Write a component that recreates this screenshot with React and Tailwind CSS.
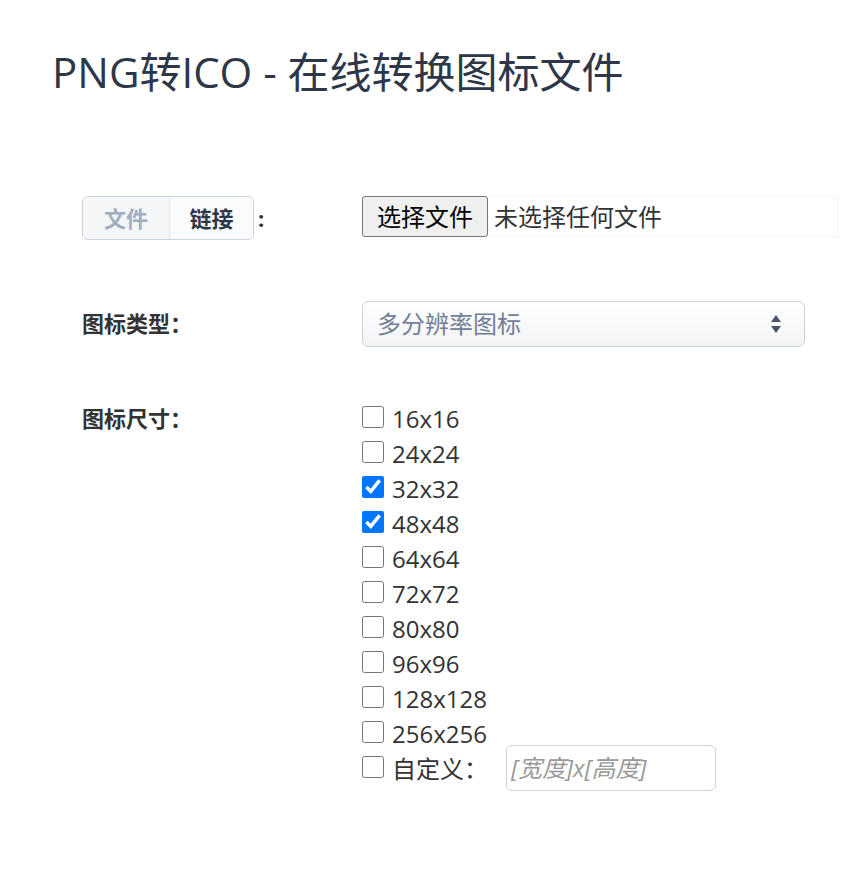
import { useState } from 'react'

const sizes = ['16x16', '24x24', '32x32', '48x48', '64x64', '72x72', '80x80', '96x96', '128x128', '256x256']
const font = { fontFamily: '"Open Sans", "Noto Sans CJK SC", sans-serif' }

const App = () => {
  const [tab, setTab] = useState('link')
  const [checked, setChecked] = useState({ '32x32': true, '48x48': true })

  return (
    <div className="min-h-screen bg-white text-[#333]" style={font}>
      <h1 className="pl-[52px] pt-[42px] text-[42px] leading-[60px] text-[#2d3748]">PNG转ICO - 在线转换图标文件</h1>

      <div className="mt-[94px] pl-[82px] flex flex-col">
        {/* source */}
        <div className="flex items-start">
          <div className="w-[280px] flex items-center">
            <div className="flex h-[44px] border border-[#cbd5e0] rounded-md overflow-hidden text-[22px] font-bold">
              <button onClick={() => setTab('file')}
                className={`w-[86px] ${tab === 'file' ? 'bg-white text-[#2d3748]' : 'bg-[#f4f6f8] text-[#a0aec0]'}`}>文件</button>
              <button onClick={() => setTab('link')}
                className={`w-[84px] border-l border-[#dfe4ea] ${tab === 'link' ? 'bg-[#fafbfc] text-[#2d3748]' : 'bg-[#f4f6f8] text-[#a0aec0]'}`}>链接</button>
            </div>
            <span className="ml-[4px] text-[22px] font-bold">:</span>
          </div>
          <div className="w-[476px] h-[41px] border border-[#f3f4f6] flex items-center">
            <button className="h-[41px] px-[14px] -ml-px bg-[#efefef] border border-[#767676] rounded-[3px] text-[24px] leading-none text-black">选择文件</button>
            <span className="ml-[6px] text-[24px] text-[#333]">未选择任何文件</span>
          </div>
        </div>

        {/* type */}
        <div className="flex items-start mt-[61px]">
          <div className="w-[280px] pt-[6px] text-[22px] font-bold">图标类型：</div>
          <div className="w-[443px] h-[46px] rounded-md border border-[#cbd5e0] bg-gradient-to-b from-white to-[#f1f3f5] flex items-center justify-between pl-[14px] pr-[22px]">
            <span className="text-[24px] text-[#718096]">多分辨率图标</span>
            <svg width="12" height="22" viewBox="0 0 12 22">
              <path d="M6 2 L11 9 L1 9 Z" fill="#4a5568" />
              <path d="M6 20 L11 13 L1 13 Z" fill="#4a5568" />
            </svg>
          </div>
        </div>

        {/* sizes */}
        <div className="flex items-start mt-[54px]">
          <div className="w-[280px] pt-[1px] text-[22px] font-bold">图标尺寸：</div>
          <div className="flex flex-col">
            {sizes.map((s) => (
              <label key={s} className="flex items-center h-[35px] text-[24px] text-[#333]">
                <input type="checkbox" checked={!!checked[s]}
                  onChange={() => setChecked({ ...checked, [s]: !checked[s] })}
                  className="w-[22px] h-[22px] m-0 mr-[8px] -mt-[4px]" />
                {s}
              </label>
            ))}
            <div className="flex items-center h-[35px] text-[24px]">
              <input type="checkbox" className="w-[22px] h-[22px] m-0 mr-[8px] -mt-[4px]" />
              <span>自定义：</span>
              <input placeholder="[宽度]x[高度]"
                className="ml-[18px] -mt-[2px] w-[210px] h-[46px] px-[4px] border border-[#ced4da] rounded-md text-[24px] italic placeholder:text-[#999] outline-none" />
            </div>
          </div>
        </div>
      </div>
    </div>
  )
}

export default App
